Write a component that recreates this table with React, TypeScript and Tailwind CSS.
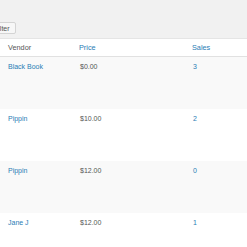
import React from 'react';

interface Row {
  vendor: string;
  price: string;
  sales: string;
}

const rows: Row[] = [
  { vendor: 'Black Book', price: '$0.00', sales: '3' },
  { vendor: 'Pippin', price: '$10.00', sales: '2' },
  { vendor: 'Pippin', price: '$12.00', sales: '0' },
  { vendor: 'Jane J', price: '$12.00', sales: '1' },
];

const App: React.FC = () => {
  return (
    <div className="w-[247px] h-[247px] overflow-hidden bg-[#f1f1f1] font-['Liberation_Sans',Arial,sans-serif]">
      <div className="h-[38px] pt-[22px] flex items-start">
        <button
          type="button"
          className="-ml-[12px] h-[12px] px-[5px] flex items-center bg-[#f7f7f7] border border-[#d4d4d4] rounded-[2px] text-[7px] leading-none text-[#555555]"
        >
          Filter
        </button>
      </div>

      <div className="bg-white border-t border-[#e5e5e5]">
        <div className="grid grid-cols-[71px_113px_1fr] pl-[8px] h-[18px] items-center pt-[1px] border-b border-[#e1e1e1] text-[7.3px]">
          <span className="text-[#555555]">Vendor</span>
          <span className="text-[#2a7db5]">Price</span>
          <span className="text-[#2a7db5]">Sales</span>
        </div>

        {rows.map((row, i) => (
          <div
            key={i}
            className={`grid grid-cols-[71px_113px_1fr] pl-[8px] h-[52px] pt-[5px] text-[7px] leading-[9px] ${i % 2 === 0 ? 'bg-[#f9f9f9]' : 'bg-white'}`}
          >
            <span className="text-[#2a7db5]">{row.vendor}</span>
            <span className="text-[#555555] pl-[1px]">{row.price}</span>
            <span className="text-[#2a7db5] pl-[1px]">{row.sales}</span>
          </div>
        ))}
      </div>
    </div>
  );
};

export default App;
